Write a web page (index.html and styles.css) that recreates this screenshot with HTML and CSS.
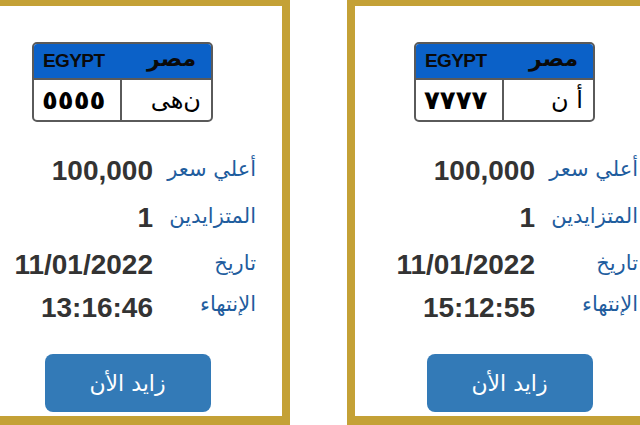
FILE: index.html
```html
<!DOCTYPE html>
<html lang="ar">
<head>
<meta charset="utf-8">
<title>مزادات اللوحات</title>
<link rel="stylesheet" href="styles.css">
</head>
<body>
<div class="cards">
  <div class="card">
    <div class="plate-wrap">
      <div class="plate">
        <div class="plate-head">
          <span class="plate-en">EGYPT</span>
          <span class="plate-ar">مصر</span>
        </div>
        <div class="plate-body">
          <span class="plate-num">٥٥٥٥</span>
          <span class="plate-let">ن&zwnj;هى</span>
        </div>
      </div>
    </div>
    <div class="info">
      <div class="label">أعلي سعر</div>
      <div class="value">100,000</div>
      <div class="label">المتزايدين</div>
      <div class="value">1</div>
      <div class="label">تاريخ الإنتهاء</div>
      <div class="value">11/01/2022 13:16:46</div>
    </div>
    <div class="btn-row"><button class="bid-btn">زايد الأن</button></div>
  </div>

  <div class="card">
    <div class="plate-wrap">
      <div class="plate">
        <div class="plate-head">
          <span class="plate-en">EGYPT</span>
          <span class="plate-ar">مصر</span>
        </div>
        <div class="plate-body">
          <span class="plate-num">٧٧٧٧</span>
          <span class="plate-let">أ ن</span>
        </div>
      </div>
    </div>
    <div class="info">
      <div class="label">أعلي سعر</div>
      <div class="value">100,000</div>
      <div class="label">المتزايدين</div>
      <div class="value">1</div>
      <div class="label">تاريخ الإنتهاء</div>
      <div class="value">11/01/2022 15:12:55</div>
    </div>
    <div class="btn-row"><button class="bid-btn">زايد الأن</button></div>
  </div>
</div>
</body>
</html>
```
FILE: styles.css
```css
html, body {
  margin: 0;
  padding: 0;
  background: #ffffff;
  overflow: hidden;
  width: 640px;
  height: 425px;
}

.cards {
  display: flex;
  gap: 57px;
  margin-left: -35px;
  margin-top: -2px;
}

.card {
  flex: 0 0 auto;
  width: 309px;
  height: 374px;
  border: 8px solid #c4a136;
  border-bottom-width: 9px;
  background: #ffffff;
  direction: rtl;
  display: flex;
  flex-direction: column;
  padding-top: 36px;
  box-sizing: content-box;
}

.plate-wrap {
  display: flex;
  justify-content: center;
  padding-right: 10px;
}

.plate {
  direction: ltr;
  width: 181px;
  height: 80px;
  box-sizing: border-box;
  border: 2px solid #5a5a5a;
  border-radius: 5px;
  overflow: hidden;
  background: #ffffff;
  display: flex;
  flex-direction: column;
}

.plate-head {
  height: 34px;
  background: #0b61c8;
  display: flex;
  align-items: center;
  justify-content: space-between;
  padding: 0 15px 0 9px;
  border-bottom: 2px solid #5a5a5a;
}

.plate-en {
  font-family: "Liberation Sans", Arial, sans-serif;
  font-weight: bold;
  font-size: 19px;
  letter-spacing: -0.6px;
  color: #0a0a0a;
}

.plate-ar {
  font-family: "DejaVu Sans", sans-serif;
  font-weight: bold;
  font-size: 22px;
  color: #0a0a0a;
  line-height: 1;
  margin-top: -4px;
}

.plate-body {
  flex: 1;
  display: flex;
}

.plate-num {
  width: 88px;
  border-right: 2px solid #5a5a5a;
  display: flex;
  align-items: center;
  padding-left: 8px;
  box-sizing: border-box;
  font-family: "DejaVu Sans", sans-serif;
  font-weight: bold;
  font-size: 26px;
  color: #000000;
}

.plate-let {
  flex: 1;
  display: flex;
  align-items: center;
  justify-content: flex-start;
  padding-right: 10px;
  direction: rtl;
  font-family: "DejaVu Sans", sans-serif;
  font-size: 24px;
  color: #000000;
}

.info {
  margin-top: 25px;
  display: grid;
  grid-template-columns: 92px 1fr;
  column-gap: 11px;
  padding: 0 26px 0 20px;
}

.label {
  padding: 2px 0;
  font-family: "DejaVu Sans", sans-serif;
  font-size: 21px;
  line-height: 41px;
  color: #1f5d9e;
  text-align: right;
  align-self: start;
}

.value {
  padding: 2px 0;
  direction: ltr;
  text-align: right;
  font-family: "Liberation Sans", Arial, sans-serif;
  font-weight: bold;
  font-size: 28px;
  line-height: 43px;
  color: #333333;
}

.btn-row {
  margin-top: 23px;
  display: flex;
  justify-content: center;
}

.bid-btn {
  width: 166px;
  height: 58px;
  border: none;
  border-radius: 8px;
  background: #337ab7;
  color: #ffffff;
  font-family: "DejaVu Sans", sans-serif;
  font-size: 22px;
  cursor: pointer;
}
```
